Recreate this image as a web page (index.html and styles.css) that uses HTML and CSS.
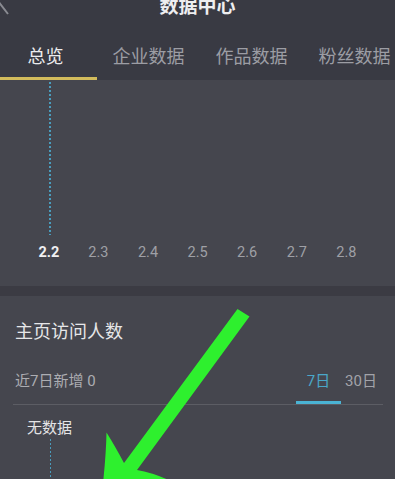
FILE: index.html
```html
<!DOCTYPE html>
<html lang="zh">
<head>
<meta charset="utf-8">
<title>数据中心</title>
<link rel="stylesheet" href="styles.css">
</head>
<body>
<div class="page">
  <header class="header">
    <div class="titlebar">
      <svg class="back" width="12" height="20" viewBox="0 0 12 20"><path d="M5 -6 L-2 2 L8 15" fill="none" stroke="#8a8b92" stroke-width="2"/></svg>
      <h1 class="title">数据中心</h1>
    </div>
    <nav class="tabs">
      <div class="tab active">总览</div>
      <div class="tab">企业数据</div>
      <div class="tab">作品数据</div>
      <div class="tab">粉丝数据</div>
    </nav>
  </header>

  <section class="trend">
    <div class="plot"><div class="guide"></div></div>
    <div class="axis">
      <span class="tick on">2.2</span>
      <span class="tick">2.3</span>
      <span class="tick">2.4</span>
      <span class="tick">2.5</span>
      <span class="tick">2.6</span>
      <span class="tick">2.7</span>
      <span class="tick">2.8</span>
    </div>
  </section>

  <section class="card">
    <h2 class="card-title">主页访问人数</h2>
    <div class="row">
      <span class="summary">近7日新增 0</span>
      <div class="range">
        <span class="range-tab on">7日</span>
        <span class="range-tab">30日</span>
      </div>
    </div>
    <div class="nodata">无数据</div>
    <div class="guide2"></div>
  </section>

  <svg class="annotation" width="395" height="479" viewBox="0 0 395 479">
    <path d="M249.5 316.5 L237.5 309 L124 463 Q115 446 106.5 432.5 Q106 458 102 492 L165 495 L184 488 Q160 474 137 470 Z" fill="#2ef02e"/>
  </svg>
</div>
</body>
</html>
```
FILE: styles.css
```css
* { box-sizing: border-box; margin: 0; padding: 0; }
html, body { width: 395px; height: 479px; overflow: hidden; }
body {
  background: #3b3b43;
  font-family: Roboto, "Noto Sans CJK SC", sans-serif;
}
.page {
  position: relative;
  width: 395px;
  height: 479px;
  overflow: hidden;
  display: flex;
  flex-direction: column;
  gap: 10px;
}
.header {
  background: #393a43;
  display: flex;
  flex-direction: column;
  margin-bottom: -10px;
}
.titlebar {
  position: relative;
  height: 24px;
  margin-top: -7px;
  display: flex;
  align-items: center;
  justify-content: center;
}
.back { position: absolute; left: 0; top: 6px; }
.title {
  font-family: "Noto Sans CJK SC", sans-serif;
  font-size: 19px;
  font-weight: 700;
  color: #eeeef0;
  line-height: 24px;
}
.tabs {
  display: flex;
  margin-left: -6px;
}
.tab {
  width: 103px;
  flex: none;
  padding-top: 28px;
  padding-bottom: 12px;
  border-bottom: 3px solid transparent;
  text-align: center;
  font-family: "Noto Sans CJK SC", sans-serif;
  font-size: 18px;
  line-height: 20px;
  color: #9c9da4;
}
.tab.active {
  color: #ececee;
  border-bottom-color: #d2bb5c;
}
.trend {
  background: #45464e;
  display: flex;
  flex-direction: column;
  padding-bottom: 23px;
}
.plot { height: 155px; }
.guide {
  margin-left: 49px;
  margin-top: 2px;
  width: 1.5px;
  height: 153px;
  background: repeating-linear-gradient(to bottom, #4a9cbc 0 2px, transparent 2px 4px);
}
.axis {
  display: flex;
  padding-top: 8px;
  padding-left: 24px;
}
.tick {
  width: 49.6px;
  text-align: center;
  font-size: 14.5px;
  line-height: 20px;
  color: #9fa0a6;
}
.tick.on { color: #f0f0f2; font-weight: 700; }
.card {
  flex: 1;
  background: #45464e;
  padding: 22px 12px 0 13px;
  display: flex;
  flex-direction: column;
}
.card-title {
  font-family: "Noto Sans CJK SC", sans-serif;
  font-size: 18px;
  font-weight: 400;
  line-height: 24px;
  color: #e6e6e8;
  padding-left: 2px;
}
.row {
  margin-top: 27px;
  display: flex;
  justify-content: space-between;
  align-items: flex-end;
  border-bottom: 1px solid #5c5d64;
  padding-right: 2px;
}
.summary {
  padding-left: 2px;
  font-size: 15px;
  line-height: 24px;
  color: #acadb2;
  padding-bottom: 11px;
}
.range { display: flex; }
.range-tab {
  font-size: 15px;
  line-height: 24px;
  padding-bottom: 8px;
  border-bottom: 3px solid transparent;
  text-align: center;
  color: #a2a3a9;
  width: 40px;
}
.range-tab.on {
  width: 45px;
  color: #4aa7c9;
  border-bottom-color: #4ab3d4;
}
.nodata {
  margin-top: 12px;
  margin-left: 14px;
  font-family: "Noto Sans CJK SC", sans-serif;
  font-size: 15px;
  line-height: 20px;
  color: #e4e4e6;
}
.guide2 {
  margin-left: 36.5px;
  margin-top: 2px;
  width: 1.5px;
  height: 60px;
  background: repeating-linear-gradient(to bottom, #4a9cbc 0 2px, transparent 2px 4px);
}
.annotation {
  position: absolute;
  left: 0;
  top: 0;
  pointer-events: none;
}
```
